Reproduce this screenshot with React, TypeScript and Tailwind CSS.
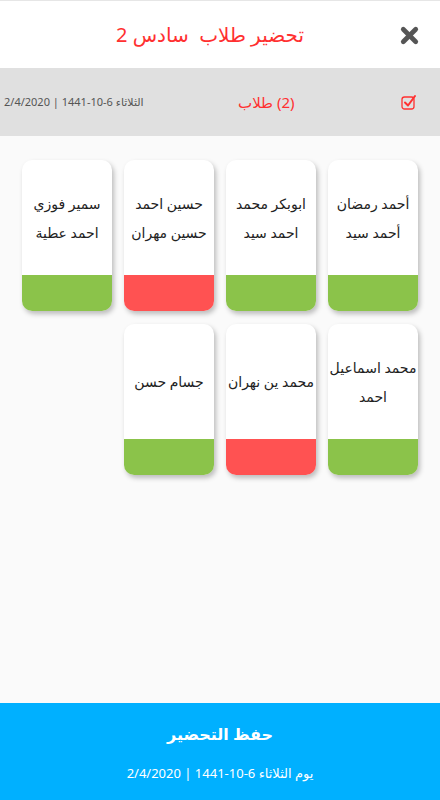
import { X } from "lucide-react";

type Student = { lines: string[]; present: boolean };

const students: Student[] = [
  { lines: ["أحمد رمضان", "أحمد سيد"], present: true },
  { lines: ["ابوبكر محمد", "احمد سيد"], present: true },
  { lines: ["حسين احمد", "حسين مهران"], present: false },
  { lines: ["سمير فوزي", "احمد عطية"], present: true },
  { lines: ["محمد اسماعيل", "احمد"], present: true },
  { lines: ["محمد ين نهران"], present: false },
  { lines: ["جسام حسن"], present: true },
];

function StudentCard({ student }: { student: Student }) {
  return (
    <div className="flex h-[151px] flex-col overflow-hidden rounded-[10px] bg-white shadow-[2px_3px_5px_rgba(0,0,0,0.25)]">
      <div className="flex flex-1 flex-col items-center justify-center text-center text-[14px] leading-[29px] tracking-[-0.3px] text-[#222]">
        {student.lines.map((l) => (
          <span key={l} className="whitespace-nowrap">
            {l}
          </span>
        ))}
      </div>
      <div
        className={
          student.present ? "h-[36px] bg-[#8bc34a]" : "h-[36px] bg-[#ff5252]"
        }
      />
    </div>
  );
}

export default function App() {
  return (
    <div
      dir="rtl"
      className="flex h-[800px] w-[440px] flex-col bg-[#fafafa]"
      style={{ fontFamily: '"Noto Sans", "DejaVu Sans", sans-serif' }}
    >
      {/* header */}
      <header className="relative flex h-[68px] items-center justify-center border-t border-[#e6e6e6] bg-white">
        <h1 className="pr-[20px] text-[20px] text-[#ff3030]">تحضير طلاب&nbsp; سادس 2</h1>
        <button className="absolute right-[18px] top-[22px] text-[#555]">
          <X size={25} strokeWidth={4.5} />
        </button>
      </header>

      {/* summary bar */}
      <div className="flex h-[68px] items-center justify-between bg-[#e0e0e0] pl-[4px] pr-[23px]">
        <svg width="16" height="16" viewBox="0 0 16 16" fill="none">
          <rect x="1" y="3" width="12" height="12" rx="2.5" stroke="#ff3030" strokeWidth="1.3" />
          <path d="M4 8.5 L7 11.5 L14 2" stroke="#ff3030" strokeWidth="2" strokeLinecap="round" strokeLinejoin="round" />
        </svg>
        <span className="pr-[12px] text-[15px] text-[#ff3030]">(2) طلاب</span>
        <span className="text-[11px] text-[#555]">الثلاثاء 6-10-1441 | 2/4/2020</span>
      </div>

      {/* students grid */}
      <main className="flex-1 px-[22px] pt-[24px]">
        <div className="grid grid-cols-4 gap-x-[12px] gap-y-[13px]">
          {students.map((s) => (
            <StudentCard key={s.lines.join(" ")} student={s} />
          ))}
        </div>
      </main>

      {/* footer */}
      <footer className="flex h-[97px] flex-col items-center bg-[#00b0ff] pt-[19px] text-white">
        <button className="text-[16px] font-semibold">حفظ التحضير</button>
        <span className="mt-[18px] text-[13px]">يوم الثلاثاء 6-10-1441 | 2/4/2020</span>
      </footer>
    </div>
  );
}
